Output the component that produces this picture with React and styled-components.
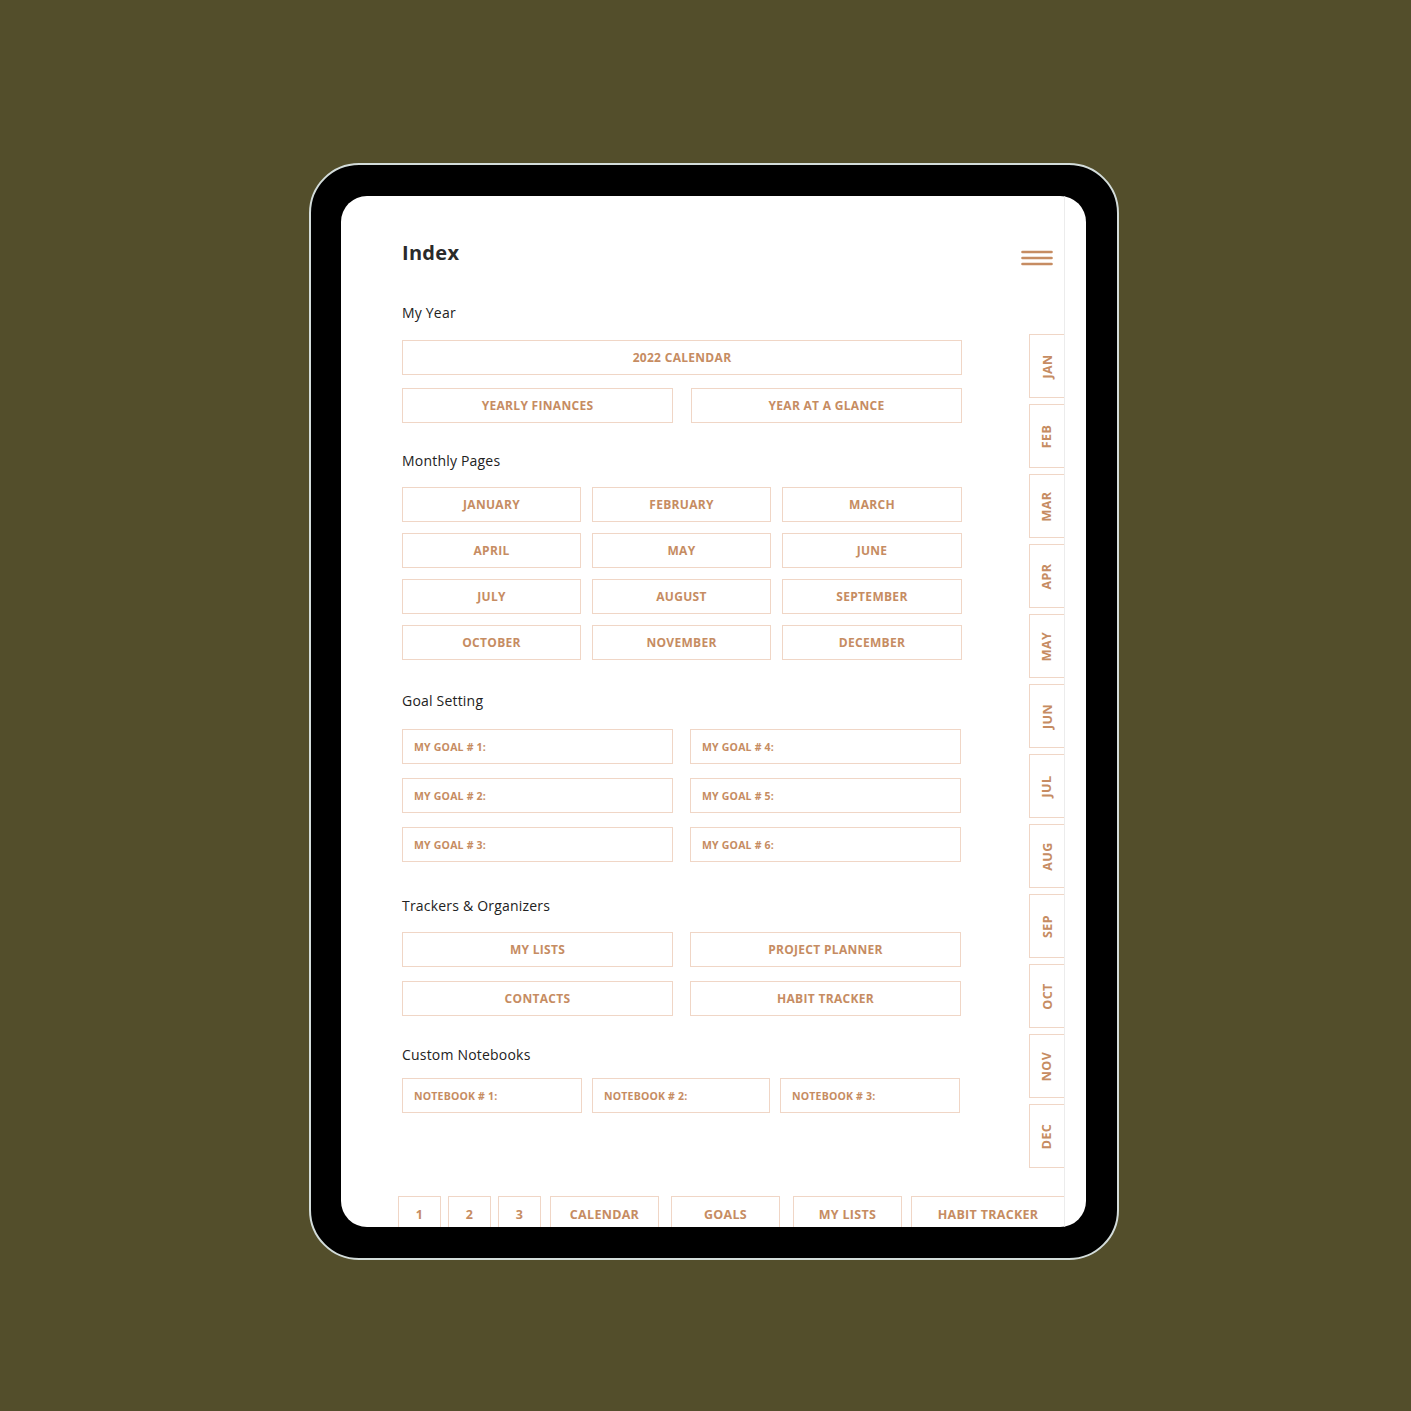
import React from "react";
import styled, { createGlobalStyle } from "styled-components";

const ACCENT = "#c68c62";
const LINE = "#f0d6c6";
const FONT = '"Open Sans", "Liberation Sans", sans-serif';

const Global = createGlobalStyle`
  html, body { margin: 0; padding: 0; background: #534e2b; }
  body { font-family: ${FONT}; }
  * { box-sizing: border-box; }
`;

const Stage = styled.div`
  width: 1411px;
  height: 1411px;
  background: #534e2b;
  padding: 163px 0 0 309px;
`;

const Frame = styled.div`
  width: 810px;
  height: 1097px;
  background: #000;
  border: 2px solid #d3dcda;
  border-radius: 50px;
  padding: 31px 31px 31px 30px;
`;

const Screen = styled.div`
  width: 745px;
  height: 1031px;
  background: #fff;
  border-radius: 26px;
  overflow: hidden;
`;

const Page = styled.div`
  width: 724px;
  height: 100%;
  border-right: 1px solid #ececec;
  display: flex;
  flex-direction: column;
`;

const Header = styled.div`
  flex-shrink: 0;
  display: flex;
  justify-content: space-between;
  align-items: center;
  padding: 43px 11px 0 61px;
`;

const Title = styled.h1`
  margin: 0;
  font-size: 20px;
  line-height: 28px;
  font-weight: 700;
  color: #2a2a2a;
  letter-spacing: 0.3px;
`;

const Burger = styled.svg`
  width: 32px;
  height: 16px;
  margin-top: 10px;
  display: block;
`;

const Body = styled.div`
  flex-shrink: 0;
  display: flex;
  height: 929px;
  padding-left: 61px;
`;

const Content = styled.div`
  width: 560px;
`;

const Section = styled.section`
  margin-top: ${(p) => p.$top}px;
`;

const Heading = styled.h2`
  margin: 0 0 ${(p) => p.$gap}px;
  font-size: 14px;
  line-height: 20px;
  font-weight: 500;
  color: #222;
  letter-spacing: 0.2px;
`;

const Grid = styled.div`
  display: grid;
  grid-template-columns: ${(p) => p.$cols};
  column-gap: ${(p) => p.$colGap}px;
  row-gap: ${(p) => p.$rowGap}px;
`;

const Btn = styled.div`
  grid-column: ${(p) => (p.$full ? "1 / -1" : "auto")};
  height: 35px;
  border: 1.5px solid ${LINE};
  display: flex;
  align-items: center;
  justify-content: ${(p) => (p.$left ? "flex-start" : "center")};
  padding-left: ${(p) => (p.$left ? 11 : 0)}px;
  color: ${ACCENT};
  font-size: ${(p) => (p.$left ? 10.5 : 12)}px;
  font-weight: 700;
  letter-spacing: ${(p) => (p.$left ? 0.2 : 0.3)}px;
`;

const SideTabs = styled.div`
  margin-left: auto;
  margin-top: 67px;
  width: 35px;
  display: flex;
  flex-direction: column;
  gap: 6px;
`;

const SideTab = styled.div`
  height: 64px;
  border: 1.5px solid ${LINE};
  border-right: none;
  display: flex;
  align-items: center;
  justify-content: center;
`;

const SideLabel = styled.span`
  transform: rotate(-90deg);
  white-space: nowrap;
  color: ${ACCENT};
  font-size: 12.5px;
  font-weight: 700;
  letter-spacing: 0.4px;
`;

const TabBar = styled.div`
  flex-shrink: 0;
  display: flex;
  padding-left: 57px;
`;

const BottomTab = styled.div`
  flex: ${(p) => (p.$w ? `0 0 ${p.$w}px` : "1")};
  margin-left: ${(p) => p.$gap}px;
  height: 46px;
  border: 1.5px solid ${LINE};
  border-right: ${(p) => (p.$w ? `1.5px solid ${LINE}` : "none")};
  text-align: center;
  padding-top: 9px;
  line-height: 18px;
  color: ${ACCENT};
  font-size: 12.5px;
  font-weight: 700;
  letter-spacing: 0.3px;
`;

const months = [
  "JANUARY", "FEBRUARY", "MARCH",
  "APRIL", "MAY", "JUNE",
  "JULY", "AUGUST", "SEPTEMBER",
  "OCTOBER", "NOVEMBER", "DECEMBER",
];
const shortMonths = ["JAN", "FEB", "MAR", "APR", "MAY", "JUN", "JUL", "AUG", "SEP", "OCT", "NOV", "DEC"];
const goals = ["MY GOAL # 1:", "MY GOAL # 4:", "MY GOAL # 2:", "MY GOAL # 5:", "MY GOAL # 3:", "MY GOAL # 6:"];
const bottom = [
  { t: "1", w: 43, g: 0 },
  { t: "2", w: 43, g: 7 },
  { t: "3", w: 43, g: 7 },
  { t: "CALENDAR", w: 109, g: 9 },
  { t: "GOALS", w: 109, g: 12 },
  { t: "MY LISTS", w: 109, g: 13 },
  { t: "HABIT TRACKER", g: 9 },
];

export default function App() {
  return (
    <Stage>
      <Global />
      <Frame>
        <Screen>
          <Page>
            <Header>
              <Title>Index</Title>
              <Burger viewBox="0 0 32 16">
                <g stroke={ACCENT} strokeWidth="2.6" strokeLinecap="round">
                  <line x1="1.5" y1="2" x2="30.5" y2="2" />
                  <line x1="1.5" y1="8" x2="30.5" y2="8" />
                  <line x1="1.5" y1="14" x2="30.5" y2="14" />
                </g>
              </Burger>
            </Header>
            <Body>
              <Content>
                <Section $top={36}>
                  <Heading $gap={17}>My Year</Heading>
                  <Grid $cols="271px 271px" $colGap={18} $rowGap={13}>
                    <Btn $full>2022 CALENDAR</Btn>
                    <Btn>YEARLY FINANCES</Btn>
                    <Btn>YEAR AT A GLANCE</Btn>
                  </Grid>
                </Section>
                <Section $top={28}>
                  <Heading $gap={16}>Monthly Pages</Heading>
                  <Grid $cols="179px 179px 180px" $colGap={11} $rowGap={11}>
                    {months.map((m) => (
                      <Btn key={m}>{m}</Btn>
                    ))}
                  </Grid>
                </Section>
                <Section $top={31}>
                  <Heading $gap={18}>Goal Setting</Heading>
                  <Grid $cols="271px 271px" $colGap={17} $rowGap={14}>
                    {goals.map((g) => (
                      <Btn key={g} $left>{g}</Btn>
                    ))}
                  </Grid>
                </Section>
                <Section $top={34}>
                  <Heading $gap={16}>Trackers &amp; Organizers</Heading>
                  <Grid $cols="271px 271px" $colGap={17} $rowGap={14}>
                    <Btn>MY LISTS</Btn>
                    <Btn>PROJECT PLANNER</Btn>
                    <Btn>CONTACTS</Btn>
                    <Btn>HABIT TRACKER</Btn>
                  </Grid>
                </Section>
                <Section $top={29}>
                  <Heading $gap={13}>Custom Notebooks</Heading>
                  <Grid $cols="180px 178px 180px" $colGap={10} $rowGap={10}>
                    <Btn $left>NOTEBOOK # 1:</Btn>
                    <Btn $left>NOTEBOOK # 2:</Btn>
                    <Btn $left>NOTEBOOK # 3:</Btn>
                  </Grid>
                </Section>
              </Content>
              <SideTabs>
                {shortMonths.map((m) => (
                  <SideTab key={m}>
                    <SideLabel>{m}</SideLabel>
                  </SideTab>
                ))}
              </SideTabs>
            </Body>
            <TabBar>
              {bottom.map((b) => (
                <BottomTab key={b.t} $w={b.w} $gap={b.g}>{b.t}</BottomTab>
              ))}
            </TabBar>
          </Page>
        </Screen>
      </Frame>
    </Stage>
  );
}
